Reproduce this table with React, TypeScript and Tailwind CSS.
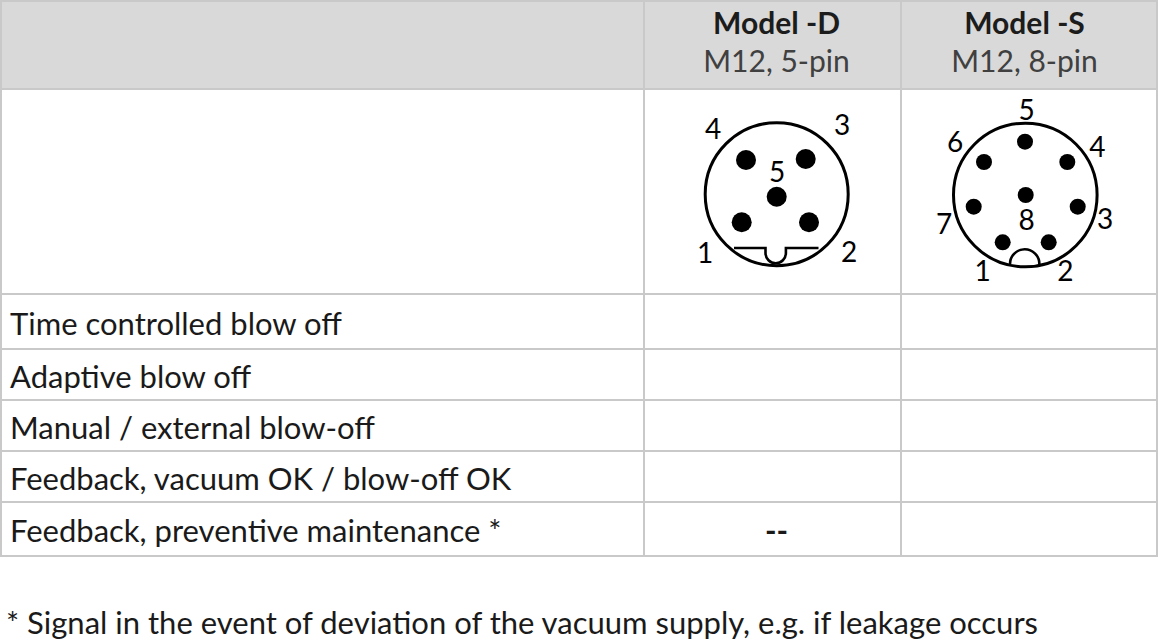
const border = "border-[#c9c9c9]"

const rows = [
  { label: "Time controlled blow off", h: "h-[55px]", d: "", s: "" },
  { label: "Adaptive blow off", h: "h-[51px]", d: "", s: "" },
  { label: "Manual / external blow-off", h: "h-[51px]", d: "", s: "" },
  { label: "Feedback, vacuum OK / blow-off OK", h: "h-[51px]", d: "", s: "" },
  { label: "Feedback, preventive maintenance *", h: "h-[54px]", d: "--", s: "" },
]

function Label({ x, y, children }: { x: number; y: number; children: string }) {
  return (
    <text x={x} y={y} textAnchor="middle" dominantBaseline="central" fontSize="28" fill="#000">
      {children}
    </text>
  )
}

// pin layout for the M12 5-pin connector, drawn in page coordinates of its cell
function FivePin() {
  const ox = 645
  const oy = 90
  return (
    <svg width="257" height="203" viewBox={`${ox} ${oy} 257 203`} className="block">
      <circle cx={776.7} cy={194.2} r={71.5} fill="none" stroke="#000" strokeWidth="3" />
      <path d="M734 248 H765.5 V253 A10.2 10.2 0 0 0 785.9 253 V248 H818.5" fill="none" stroke="#000" strokeWidth="2.6" />
      <circle cx={746} cy={160} r={10} />
      <circle cx={805.7} cy={159} r={10} />
      <circle cx={776.7} cy={196.7} r={10} />
      <circle cx={741.7} cy={222.3} r={10} />
      <circle cx={809} cy={222.3} r={10} />
      <Label x={713} y={128}>4</Label>
      <Label x={842} y={124}>3</Label>
      <Label x={777} y={171}>5</Label>
      <Label x={705} y={252}>1</Label>
      <Label x={849} y={251}>2</Label>
    </svg>
  )
}

function EightPin() {
  const ox = 902
  const oy = 90
  return (
    <svg width="254" height="203" viewBox={`${ox} ${oy} 254 203`} className="block">
      <circle cx={1025.3} cy={195} r={71.8} fill="none" stroke="#000" strokeWidth="3" />
      <path d="M1010 264 A14.7 14.7 0 0 1 1039.4 264" fill="none" stroke="#000" strokeWidth="2.6" />
      <circle cx={1025} cy={141.7} r={8} />
      <circle cx={984} cy={162} r={8} />
      <circle cx={1067.3} cy={162} r={8} />
      <circle cx={1025.7} cy={195} r={8} />
      <circle cx={973.7} cy={206.7} r={8} />
      <circle cx={1077.7} cy={206.7} r={8} />
      <circle cx={1002.7} cy={242.3} r={8} />
      <circle cx={1048.7} cy={242.3} r={8} />
      <Label x={1026.7} y={109}>5</Label>
      <Label x={955} y={141}>6</Label>
      <Label x={1097.3} y={146}>4</Label>
      <Label x={944} y={223}>7</Label>
      <Label x={1105} y={218}>3</Label>
      <Label x={1026.7} y={219}>8</Label>
      <Label x={982.7} y={270}>1</Label>
      <Label x={1065.3} y={270}>2</Label>
    </svg>
  )
}

export default function App() {
  return (
    <div className="w-[1158px] h-[644px] bg-white font-['Lato',sans-serif] text-[#1a1a1a] overflow-hidden">
      <div className={`w-[1158px] border-t-2 border-l-2 ${border}`}>
        {/* header */}
        <div className="flex h-[88px] bg-[#d9d9d9]">
          <div className={`w-[643px] border-r-2 border-b-2 ${border}`} />
          {[
            { title: "Model -D", sub: "M12, 5-pin", w: "w-[257px] pl-[8px]" },
            { title: "Model -S", sub: "M12, 8-pin", w: "w-[256px] pr-[9px]" },
          ].map((c) => (
            <div
              key={c.title}
              className={`${c.w} border-r-2 border-b-2 ${border} flex flex-col items-center pt-[1px] leading-[38px]`}
            >
              <span className="text-[30px] font-bold text-[#1c1c1c]">{c.title}</span>
              <span className="text-[30px] text-[#404040]">{c.sub}</span>
            </div>
          ))}
        </div>

        {/* connector drawings */}
        <div className="flex h-[205px]">
          <div className={`w-[643px] border-r-2 border-b-2 ${border}`} />
          <div className={`w-[257px] border-r-2 border-b-2 ${border}`}>
            <FivePin />
          </div>
          <div className={`w-[256px] border-r-2 border-b-2 ${border}`}>
            <EightPin />
          </div>
        </div>

        {rows.map((r) => (
          <div key={r.label} className={`flex ${r.h} text-[31px]`}>
            <div className={`w-[643px] border-r-2 border-b-2 ${border} flex items-center pl-[8px] pt-[3px]`}>
              {r.label}
            </div>
            <div className={`w-[257px] border-r-2 border-b-2 ${border} flex items-center justify-center pl-[8px] pt-[2px] font-bold`}>
              {r.d}
            </div>
            <div className={`w-[256px] border-r-2 border-b-2 ${border} flex items-center justify-center`}>
              {r.s}
            </div>
          </div>
        ))}
      </div>

      <p className="mt-[45px] pl-[6px] text-[31px] leading-[40px]">
        * Signal in the event of deviation of the vacuum supply, e.g. if leakage occurs
      </p>
    </div>
  )
}
